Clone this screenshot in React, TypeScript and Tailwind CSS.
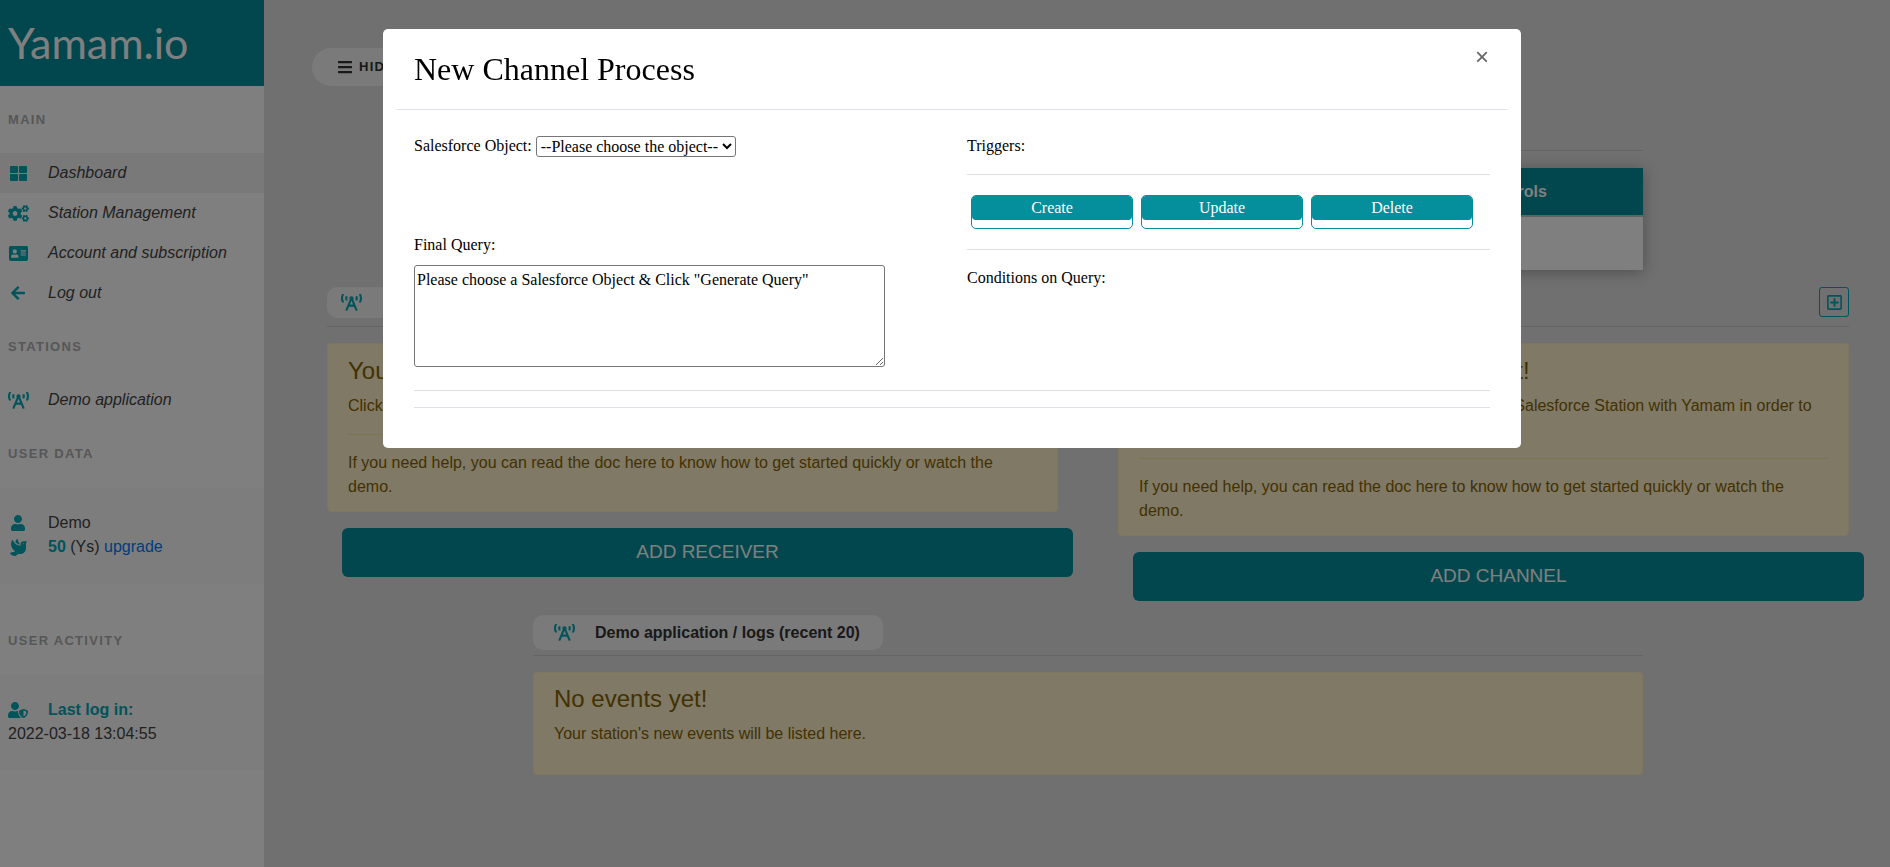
import { ReactNode } from "react";
import {
  FaAddressCard,
  FaArrowLeft,
  FaBars,
  FaBroadcastTower,
  FaCogs,
  FaDove,
  FaRegPlusSquare,
  FaThLarge,
  FaUser,
  FaUserShield,
} from "react-icons/fa";

function SectionLabel({ children, className }: { children: ReactNode; className: string }) {
  return (
    <div className={`pl-2 text-[13px] leading-5 font-bold tracking-[1.3px] uppercase text-[#aeaeae] ${className}`}>
      {children}
    </div>
  );
}

function NavRow({ icon, label, active }: { icon: ReactNode; label: string; active?: boolean }) {
  return (
    <div className={`flex h-10 items-center italic text-[16px] text-[#444] ${active ? "bg-[#f3f3f3]" : ""}`}>
      <span className="flex w-12 shrink-0 justify-center pr-[12px] text-[#00a8b4]">{icon}</span>
      <span>{label}</span>
    </div>
  );
}

function Sidebar() {
  return (
    <aside className="flex w-[264px] shrink-0 flex-col bg-white">
      <div className="flex h-[86px] items-center bg-[#058e9c] pl-[8px] font-['Lato',sans-serif] text-[43px] text-white">
        Yamam.io
      </div>
      <SectionLabel className="mt-[24px]">Main</SectionLabel>
      <div className="mt-[23px]">
        <NavRow active icon={<FaThLarge size={17} />} label="Dashboard" />
        <NavRow icon={<FaCogs size={21} />} label="Station Management" />
        <NavRow icon={<FaAddressCard size={19} />} label="Account and subscription" />
        <NavRow icon={<FaArrowLeft size={16} />} label="Log out" />
      </div>
      <SectionLabel className="mt-[24px]">Stations</SectionLabel>
      <div className="mt-[23px]">
        <NavRow icon={<FaBroadcastTower size={21} />} label="Demo application" />
      </div>
      <SectionLabel className="mt-[24px]">User data</SectionLabel>
      <div className="mt-[24px] h-[96px] bg-[#fafafa] pt-[23px] text-[16px] leading-6 text-[#444]">
        <div className="flex items-center">
          <span className="flex w-12 shrink-0 justify-center pr-[12px] text-[#00a8b4]">
            <FaUser size={16} />
          </span>
          Demo
        </div>
        <div className="flex items-center">
          <span className="flex w-12 shrink-0 justify-center pr-[12px] text-[#00a8b4]">
            <FaDove size={17} />
          </span>
          <span>
            <b className="text-[#00a8b4]">50</b> (Ys) <span className="text-[#007bff]">upgrade</span>
          </span>
        </div>
      </div>
      <SectionLabel className="mt-[47px]">User activity</SectionLabel>
      <div className="mt-[24px] h-[96px] bg-[#fafafa] pt-[23px] text-[16px] leading-6 text-[#444]">
        <div className="flex items-center font-bold text-[#00a8b4]">
          <span className="flex w-12 shrink-0 justify-center pr-[12px]">
            <FaUserShield size={20} />
          </span>
          Last log in:
        </div>
        <div className="pl-2">2022-03-18 13:04:55</div>
      </div>
    </aside>
  );
}

function StationPill({ children, className, iconClass }: { children: ReactNode; className: string; iconClass: string }) {
  return (
    <div className={`flex items-center rounded-[10px] bg-[#f4f4f4] font-bold text-[16px] text-[#333] ${className}`}>
      <span className={`shrink-0 text-[#00a8b4] ${iconClass}`}>
        <FaBroadcastTower size={21} />
      </span>
      {children}
    </div>
  );
}

function Notice({ title, body, className }: { title: string; body: string; className: string }) {
  return (
    <div className={`rounded-[4px] border border-[#ffeeba] bg-[#fff3cd] px-[20px] pt-[12px] text-[#856404] ${className}`}>
      <div className="text-[24px] leading-[29px]">{title}</div>
      <div className="mt-[9px] text-[16px] leading-6">{body}</div>
      <hr className="my-[16px] border-[#ffe8a1]" />
      <div className="text-[16px] leading-6">
        If you need help, you can read the doc here to know how to get started quickly or watch the demo.
      </div>
    </div>
  );
}

function AddButton({ label }: { label: string }) {
  return (
    <div className="ml-[15px] mt-[16px] flex h-[49px] w-[731px] items-center justify-center rounded-[6px] bg-[#058e9c] text-[19px] text-white">
      {label}
    </div>
  );
}

function Dashboard() {
  return (
    <main className="flex min-w-0 flex-1 flex-col overflow-hidden pl-[48px] pt-[48px] pb-[92px]">
      <div className="flex h-[38px] w-[120px] items-center gap-[6px] rounded-full bg-[#f4f4f4] pl-[25px] text-[13px] font-bold tracking-[1.3px] text-[#333]">
        <FaBars size={16} />
        HIDE
      </div>

      <div className="ml-[221px] mt-[64px] w-[1110px] border-t border-[#c8c8c8]">
        <div className="ml-auto mt-[17px] w-[258px] bg-white shadow-[0_2px_14px_rgba(0,0,0,0.3)]">
          <div className="flex h-[49px] items-center justify-center border-b-2 border-[#c4c4c4] bg-[#058e9c] font-bold text-[16px] text-white">
            Controls
          </div>
          <div className="h-[53px]" />
        </div>
      </div>

      <div className="ml-[15px] mt-[17px] flex w-[1537px] gap-[45px]">
        <section className="w-[746px]">
          <div className="w-[731px] border-b border-[#c8c8c8] pb-[8px]">
            <StationPill className="h-[31px] w-[340px]" iconClass="w-[74px] pl-[14px]">
              Demo application / receivers
            </StationPill>
          </div>
          <Notice
            className="mt-[16px] h-[169px] w-[731px]"
            title="You don't have any receivers yet!"
            body="Click the button below to add your first receiver."
          />
          <AddButton label="ADD RECEIVER" />
        </section>
        <section className="w-[746px]">
          <div className="flex w-[731px] items-start justify-between border-b border-[#c8c8c8] pb-[8px]">
            <StationPill className="h-[31px] w-[340px]" iconClass="w-[74px] pl-[14px]">
              Demo application / channels
            </StationPill>
            <span className="flex h-[30px] w-[30px] items-center justify-center rounded-[3px] border border-[#00a8b4] text-[#00a8b4]">
              <FaRegPlusSquare size={17} />
            </span>
          </div>
          <Notice
            className="mt-[16px] h-[193px] w-[731px]"
            title="You haven't added any channels yet!"
            body="Click the buttons below to add and connect your first Salesforce Station with Yamam in order to start receiving events."
          />
          <AddButton label="ADD CHANNEL" />
        </section>
      </div>

      <div className="ml-[221px] mt-[14px] w-[1110px]">
        <div className="border-b border-[#c8c8c8] pb-[5px]">
          <StationPill className="h-[35px] w-[350px]" iconClass="w-[62px] pl-[21px]">
            Demo application / logs (recent 20)
          </StationPill>
        </div>
        <div className="mt-[16px] h-[103px] rounded-[4px] border border-[#ffeeba] bg-[#fff3cd] px-[20px] pt-[11px] text-[#856404]">
          <div className="text-[24px] leading-[29px]">No events yet!</div>
          <div className="mt-[9px] text-[16px] leading-6">Your station's new events will be listed here.</div>
        </div>
      </div>
    </main>
  );
}

function TriggerButton({ label }: { label: string }) {
  return (
    <div className="h-[34px] w-[162px] rounded-[5px] border border-[#058e9c] bg-white">
      <div className="flex h-[24px] items-center justify-center rounded-[4px] bg-[#058e9c] text-white">{label}</div>
    </div>
  );
}

function ChannelModal() {
  return (
    <div className="fixed inset-0 z-10 bg-[rgba(0,0,0,0.5)]">
      <div className="absolute left-[383px] top-[29px] h-[419px] w-[1138px] rounded-[5px] bg-white px-[14px] font-['Liberation_Serif',serif] text-[16px] text-black">
        <div className="relative flex h-[81px] items-center border-b border-[#dee2e6] pl-[17px] text-[32px]">
          New Channel Process
          <span className="absolute right-[18px] top-[16px] font-['Liberation_Sans',sans-serif] text-[24px] leading-6 text-[#666]">
            ×
          </span>
        </div>
        <div className="flex pl-[17px] pr-[17px]">
          <div className="w-[553px] shrink-0">
            <div className="mt-[26px] flex h-[20px] items-center gap-[4px]">
              <span>Salesforce Object:</span>
              <select className="h-[21px] w-[200px] rounded-[3px] border border-[#767676] bg-white text-[16px]">
                <option>--Please choose the object--</option>
              </select>
            </div>
            <div className="mt-[79px] leading-5">Final Query:</div>
            <textarea
              readOnly
              className="mt-[10px] block h-[102px] w-[471px] rounded-[3px] border border-[#767676] p-[2px] resize-both"
              value={'Please choose a Salesforce Object & Click "Generate Query"'}
            />
          </div>
          <div className="flex-1">
            <div className="mt-[26px] leading-5">Triggers:</div>
            <hr className="mt-[18px] border-[#dee2e6]" />
            <div className="ml-[4px] mt-[20px] flex gap-[8px]">
              <TriggerButton label="Create" />
              <TriggerButton label="Update" />
              <TriggerButton label="Delete" />
            </div>
            <hr className="mt-[20px] border-[#dee2e6]" />
            <div className="mt-[18px] leading-5">Conditions on Query:</div>
          </div>
        </div>
        <div className="px-[17px]">
          <hr className="mt-[23px] border-[#dee2e6]" />
          <hr className="mt-[16px] border-[#dee2e6]" />
        </div>
      </div>
    </div>
  );
}

export default function App() {
  return (
    <div className="flex min-h-[867px] bg-[#e0e0e0] font-['Liberation_Sans',sans-serif]">
      <Sidebar />
      <Dashboard />
      <ChannelModal />
    </div>
  );
}
